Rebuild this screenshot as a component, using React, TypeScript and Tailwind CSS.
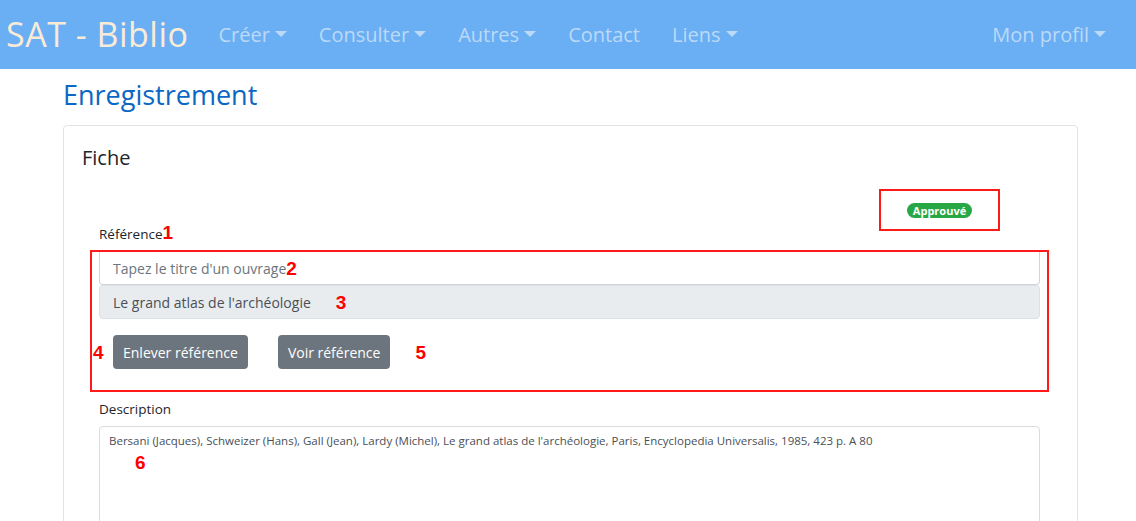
function Caret() {
    return <span className="inline-block ml-[5px] align-middle w-0 h-0 border-x-[6px] border-x-transparent border-t-[6px] border-t-current relative -top-[2px]" />;
}

function NavItem({ label, caret = true }: { label: string; caret?: boolean }) {
    return (
        <span className="text-[20px] text-[#bcd9f8] whitespace-nowrap">
            {label}
            {caret && <Caret />}
        </span>
    );
}

function Mark({ n, className = '' }: { n: string; className?: string }) {
    return (
        <span className={`text-[19px] font-bold text-[#ff0000] leading-none ${className}`} style={{ fontFamily: '"Liberation Sans", sans-serif' }}>
            {n}
        </span>
    );
}

export default function App() {
    return (
        <div className="min-h-[521px] bg-white text-[#212529]" style={{ fontFamily: '"Open Sans", "Noto Sans", sans-serif' }}>
            <nav className="h-[69px] bg-[#6aaff3] flex items-center pl-[6px] pr-[30px]">
                <span className="text-[34px] text-[#faebd7] tracking-[0.5px] mr-[30px] leading-none -mt-[2px]">SAT - Biblio</span>
                <div className="flex items-center gap-[32px]">
                    <NavItem label="Créer" />
                    <NavItem label="Consulter" />
                    <NavItem label="Autres" />
                    <NavItem label="Contact" caret={false} />
                    <NavItem label="Liens" />
                </div>
                <div className="ml-auto">
                    <NavItem label="Mon profil" />
                </div>
            </nav>

            <main className="ml-[63px] w-[1015px]">
                <h3 className="text-[27px] text-[#0b67c4] leading-[1.2] pt-[10px] pb-[14px]">Enregistrement</h3>
                <div className="border border-[#e3e3e3] rounded-[4px] px-[18px] pt-[20px] pb-[40px]">
                    <h5 className="text-[20px] leading-[1.2]">Fiche</h5>
                    <div className="pl-[17px] pr-[19px] mt-[19px]">
                        <div className="flex items-end justify-between">
                            <label className="text-[13.5px] leading-[20px] mb-[-3px]">
                                Référence<Mark n="1" />
                            </label>
                            <div className="w-[121px] h-[42px] border-2 border-[#ff1a1a] mr-[40px] mb-[10px] flex items-center justify-center">
                                <span className="bg-[#28a745] text-white text-[11px] font-bold rounded-full px-[6px] leading-[15px]">Approuvé</span>
                            </div>
                        </div>
                        <div className="border-2 border-[#ff1a1a] -ml-[9px] mr-[-9px] mt-[9px] pl-[7px] pr-[7px] pb-[21px]">
                            <div className="h-[33px] border border-[#ced4da] border-t-0 rounded-b-[4px] bg-white flex items-center pl-[13px] text-[14px] text-[#6c757d]">
                                Tapez le titre d'un ouvrage
                                <Mark n="2" />
                            </div>
                            <div className="h-[34px] border border-[#dcdfe3] rounded-[4px] bg-[#e9ecef] flex items-center pl-[13px] text-[14px] text-[#495057]">
                                Le grand atlas de l'archéologie
                                <Mark n="3" className="ml-[25px]" />
                            </div>
                            <div className="flex items-center mt-[16px] -ml-[6px]">
                                <Mark n="4" className="w-[13px]" />
                                <button className="h-[34px] px-[10px] rounded-[4px] bg-[#6c757d] text-white text-[14px] ml-[7px]">Enlever référence</button>
                                <button className="h-[34px] px-[10px] rounded-[4px] bg-[#6c757d] text-white text-[14px] ml-[30px]">Voir référence</button>
                                <Mark n="5" className="ml-[25px]" />
                            </div>
                        </div>
                        <label className="block text-[13.5px] leading-[20px] mt-[7px]">Description</label>
                        <div className="mt-[7px] h-[120px] border border-[#dcdcdc] rounded-[4px] px-[9px] pt-[5px] text-[11.5px] text-[#495057]">
                            <div>Bersani (Jacques), Schweizer (Hans), Gall (Jean), Lardy (Michel), Le grand atlas de l'archéologie, Paris, Encyclopedia Universalis, 1985, 423 p. A 80</div>
                            <div className="ml-[26px] mt-[3px]">
                                <Mark n="6" />
                            </div>
                        </div>
                    </div>
                </div>
            </main>
        </div>
    );
}
